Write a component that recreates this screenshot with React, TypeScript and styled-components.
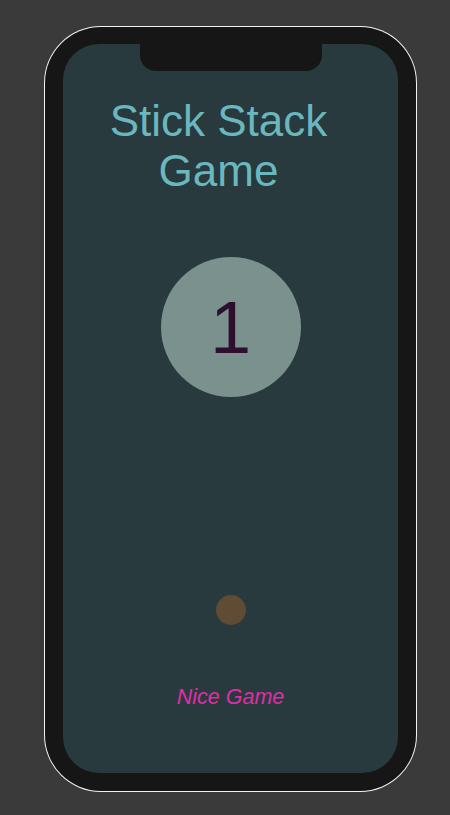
import React from "react";
import styled, { createGlobalStyle } from "styled-components";

const Global = createGlobalStyle`
  html, body { margin: 0; padding: 0; background: #3a3a3a; }
  body { font-family: "Liberation Sans", Arial, sans-serif; }
`;

const Page = styled.div`
  width: 450px;
  height: 815px;
  padding: 27px 0 0 45px;
  box-sizing: border-box;
`;

const Phone = styled.div`
  width: 371px;
  height: 764px;
  box-sizing: border-box;
  border-radius: 56px;
  background: #161616;
  box-shadow: 0 0 0 1px #f2f2f2;
  padding: 17px 18px 18px 18px;
`;

const Screen = styled.div`
  position: relative;
  width: 100%;
  height: 100%;
  border-radius: 36px;
  background: #283a3d;
  display: flex;
  flex-direction: column;
  align-items: center;
  padding-top: 52px;
  box-sizing: border-box;
`;

const Notch = styled.div`
  position: absolute;
  top: 0;
  left: 77px;
  width: 182px;
  height: 27px;
  background: #161616;
  border-radius: 0 0 16px 16px;
`;

const Title = styled.h1`
  margin: 0 24px 0 0;
  font-weight: normal;
  font-size: 44px;
  line-height: 50px;
  color: #6bb7bf;
  text-align: center;
`;

const Score = styled.div`
  margin-top: 61px;
  width: 140px;
  height: 140px;
  border-radius: 50%;
  background: #7a918e;
  color: #2e0f2d;
  font-size: 74px;
  display: flex;
  align-items: center;
  justify-content: center;
`;

const Ball = styled.div`
  margin-top: 198px;
  width: 30px;
  height: 30px;
  border-radius: 50%;
  background: #604b35;
`;

const Caption = styled.div`
  margin-top: 60px;
  font-style: italic;
  font-size: 21.5px;
  line-height: 24px;
  color: #e22ca7;
`;

export default function App() {
  return (
    <>
      <Global />
      <Page>
        <Phone>
          <Screen>
            <Notch />
            <Title>
              Stick Stack
              <br />
              Game
            </Title>
            <Score>1</Score>
            <Ball />
            <Caption>Nice Game</Caption>
          </Screen>
        </Phone>
      </Page>
    </>
  );
}
